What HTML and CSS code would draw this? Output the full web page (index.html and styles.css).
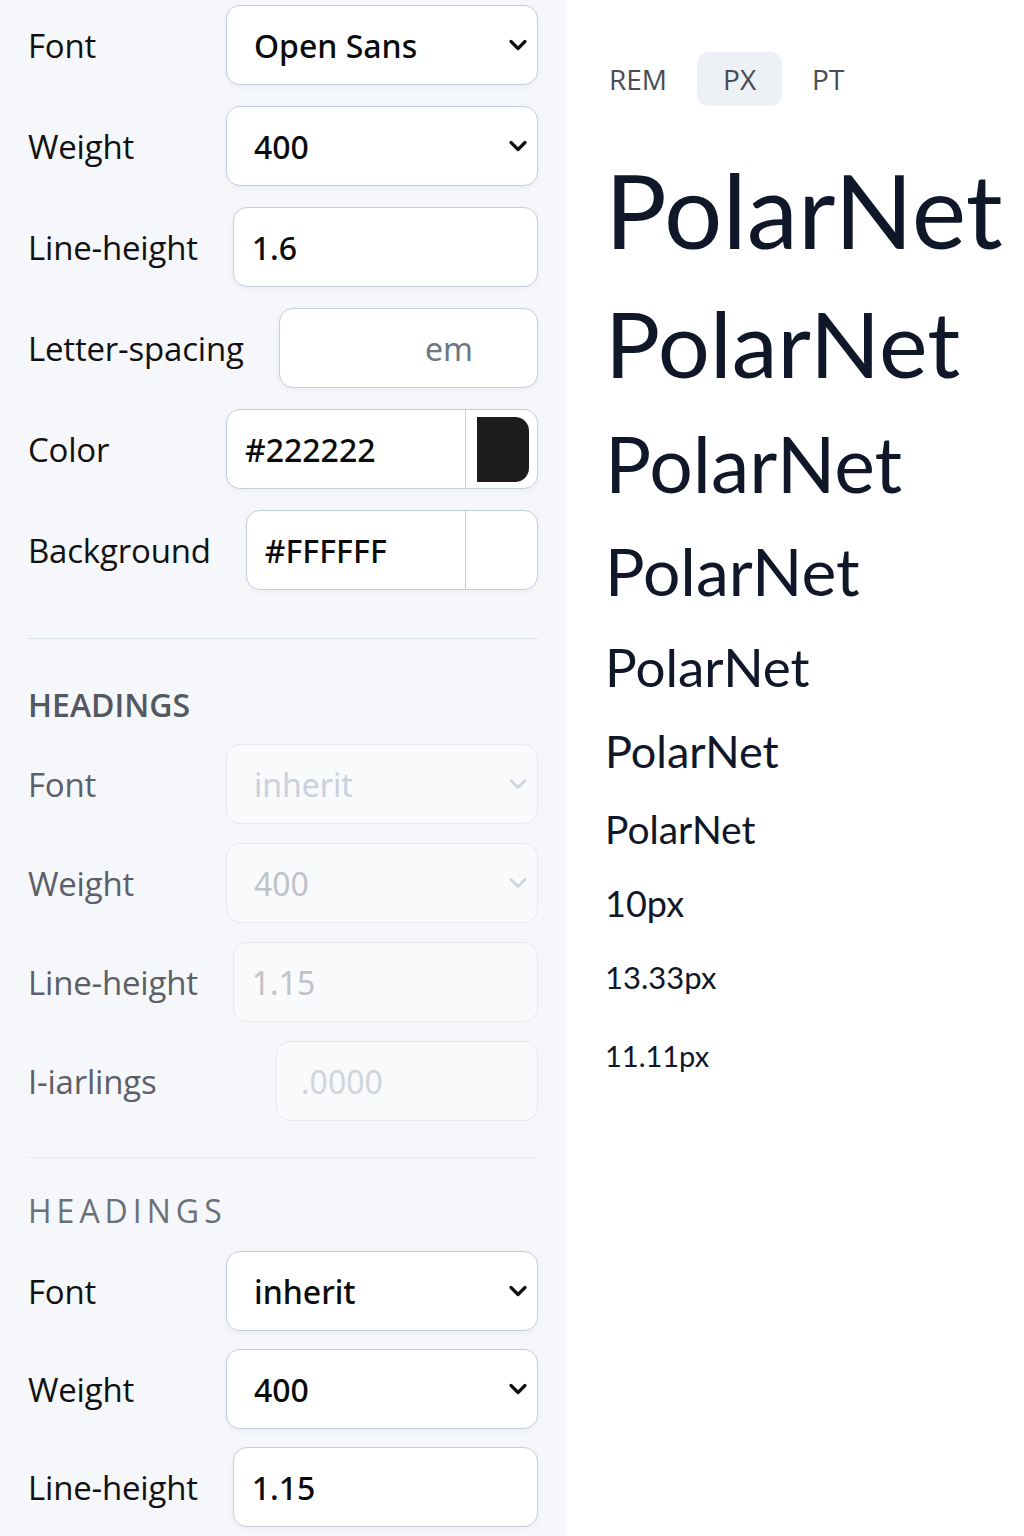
FILE: index.html
```html
<!DOCTYPE html>
<html lang="en">
<head>
<meta charset="utf-8">
<title>Typography settings</title>
<link rel="stylesheet" href="styles.css">
</head>
<body>
<div class="app">
  <aside class="panel">
    <div class="group">
      <div class="row">
        <span class="label">Font</span>
        <div class="field select"><span class="val">Open Sans</span><svg class="chev" viewBox="0 0 20 14"><path d="M3 3.5 L10 10.5 L17 3.5"/></svg></div>
      </div>
      <div class="row">
        <span class="label">Weight</span>
        <div class="field select"><span class="val">400</span><svg class="chev" viewBox="0 0 20 14"><path d="M3 3.5 L10 10.5 L17 3.5"/></svg></div>
      </div>
      <div class="row">
        <span class="label">Line-height</span>
        <div class="field text num"><span class="val">1.6</span></div>
      </div>
      <div class="row">
        <span class="label">Letter-spacing</span>
        <div class="field text unit"><span class="suffix">em</span></div>
      </div>
      <div class="row">
        <span class="label">Color</span>
        <div class="field color"><span class="val">#222222</span><span class="swatch-cell"><span class="swatch dark"></span></span></div>
      </div>
      <div class="row">
        <span class="label">Background</span>
        <div class="field color"><span class="val">#FFFFFF</span><span class="swatch-cell"></span></div>
      </div>
    </div>

    <hr class="divider">
    <h3 class="section-title">HEADINGS</h3>

    <div class="group group-tight disabled">
      <div class="row">
        <span class="label">Font</span>
        <div class="field select"><span class="val val-blue">inherit</span><svg class="chev" viewBox="0 0 20 14"><path d="M3 3.5 L10 10.5 L17 3.5"/></svg></div>
      </div>
      <div class="row">
        <span class="label">Weight</span>
        <div class="field select"><span class="val">400</span><svg class="chev" viewBox="0 0 20 14"><path d="M3 3.5 L10 10.5 L17 3.5"/></svg></div>
      </div>
      <div class="row">
        <span class="label">Line-height</span>
        <div class="field text num"><span class="val">1.15</span></div>
      </div>
      <div class="row">
        <span class="label label-wide">I-iarlings</span>
        <div class="field text num"><span class="val val-faint">.0000</span></div>
      </div>
    </div>

    <hr class="divider divider-2">
    <h3 class="section-title spaced">HEADINGS</h3>

    <div class="group group-tighter">
      <div class="row">
        <span class="label">Font</span>
        <div class="field select"><span class="val">inherit</span><svg class="chev" viewBox="0 0 20 14"><path d="M3 3.5 L10 10.5 L17 3.5"/></svg></div>
      </div>
      <div class="row">
        <span class="label">Weight</span>
        <div class="field select"><span class="val">400</span><svg class="chev" viewBox="0 0 20 14"><path d="M3 3.5 L10 10.5 L17 3.5"/></svg></div>
      </div>
      <div class="row">
        <span class="label">Line-height</span>
        <div class="field text num"><span class="val">1.15</span></div>
      </div>
    </div>
  </aside>

  <main class="preview">
    <div class="tabs">
      <span class="tab">REM</span>
      <span class="tab active">PX</span>
      <span class="tab">PT</span>
    </div>
    <div class="samples">
      <div class="sample s1">PolarNet</div>
      <div class="sample s2">PolarNet</div>
      <div class="sample s3">PolarNet</div>
      <div class="sample s4">PolarNet</div>
      <div class="sample s5">PolarNet</div>
      <div class="sample s6">PolarNet</div>
      <div class="sample s7">PolarNet</div>
      <div class="sample s8">10px</div>
      <div class="sample s9">13.33px</div>
      <div class="sample s10">11.11px</div>
    </div>
  </main>
</div>
</body>
</html>
```

FILE: styles.css
```css
* { box-sizing: border-box; }

html, body {
  margin: 0;
  padding: 0;
  background: #ffffff;
}

body {
  font-family: "Open Sans", "Noto Sans", sans-serif;
  color: #111111;
}

.app {
  display: flex;
  min-height: 1536px;
}

/* ---------- left panel ---------- */
.panel {
  width: 566px;
  flex: 0 0 566px;
  background: #f5f7fa;
  padding: 5px 28px 0 28px;
  box-shadow: 2px 0 6px rgba(30, 45, 70, 0.04);
}

.group {
  display: flex;
  flex-direction: column;
  gap: 21px;
}
.group-tight { gap: 19px; margin-top: 19px; }
.group-tighter { gap: 18px; margin-top: 20px; }

.row {
  display: flex;
  align-items: center;
  gap: 35px;
  height: 80px;
}

.label {
  min-width: 163px;
  white-space: nowrap;
  font-size: 33px;
  color: #111;
  letter-spacing: -0.2px;
}
.label-wide { min-width: 213px; }

.field {
  flex: 1;
  height: 100%;
  background: #ffffff;
  border: 1.5px solid #c4cedb;
  border-radius: 14px;
  display: flex;
  align-items: center;
  box-shadow: 0 2px 6px rgba(40, 60, 90, 0.05);
  font-family: "Noto Sans", "Open Sans", sans-serif;
  font-size: 32px;
  font-weight: 500;
  color: #0b0b0b;
  overflow: hidden;
}

.select {
  justify-content: space-between;
  padding: 0 9px 0 27px;
}
.chev {
  width: 20px;
  height: 14px;
  fill: none;
  stroke: #111;
  stroke-width: 3.2;
  stroke-linecap: round;
  stroke-linejoin: round;
}

.num { padding: 0 0 0 18px; }

.unit {
  justify-content: flex-end;
  padding-right: 64px;
}
.suffix {
  color: #6f7682;
  font-weight: 400;
}

.color {
  padding-left: 18px;
  justify-content: space-between;
}
.swatch-cell {
  width: 72px;
  height: 100%;
  border-left: 1.5px solid #c4cedb;
  display: flex;
  align-items: center;
  padding: 0 8px 0 11px;
}
.swatch {
  width: 100%;
  height: 65px;
  border-radius: 0 14px 14px 0;
}
.swatch.dark { background: #1c1c1e; }

/* disabled group */
.disabled .label { color: #5b6068; }
.disabled .field {
  background: #f8fafc;
  border-color: #e5e9ef;
  box-shadow: none;
  color: #bfc3c9;
  font-weight: 400;
}
.disabled .chev { stroke: #cfd5dd; stroke-width: 2.6; }
.val-blue { color: #c9d1dc; }
.val-faint { color: #d1d5db; padding-left: 6px; }

.divider {
  border: 0;
  height: 1px;
  background: #dce2ea;
  margin: 48px 0 0 0;
}
.divider-2 { margin-top: 36px; background: #e3e8ee; }

.section-title {
  margin: 46px 0 0 0;
  font-size: 32px;
  line-height: 40px;
  font-weight: 600;
  color: #54585f;
}
.section-title.spaced {
  margin-top: 33px;
  letter-spacing: 5px;
  font-weight: 500;
  color: #6c7079;
}

/* ---------- preview ---------- */
.preview {
  flex: 1;
  padding: 52px 0 0 42px;
  background: #ffffff;
}

.tabs {
  display: flex;
  gap: 4px;
  margin-left: -25px;
}
.tab {
  height: 54px;
  line-height: 54px;
  padding: 0 26px;
  border-radius: 12px;
  font-size: 28px;
  color: #474c55;
}
.tab.active { background: #edf0f4; }

.samples {
  display: flex;
  flex-direction: column;
  gap: 36px;
  margin-top: 52px;
  margin-left: -3px;
  font-family: "Lato", "Open Sans", sans-serif;
  color: #0f1729;
  white-space: nowrap;
}
.sample { line-height: 1; }
.s1 { font-size: 103px; }
.s2 { font-size: 92px; }
.s3 { font-size: 77px; }
.s4 { font-size: 66px; }
.s5 { font-size: 53px; }
.s6 { font-size: 45px; }
.s7 { font-size: 39px; }
.s8 { font-size: 36px; }
.s9 { font-size: 31px; margin-top: 5px; }
.s10 { font-size: 29px; margin-top: 12px; }
```
